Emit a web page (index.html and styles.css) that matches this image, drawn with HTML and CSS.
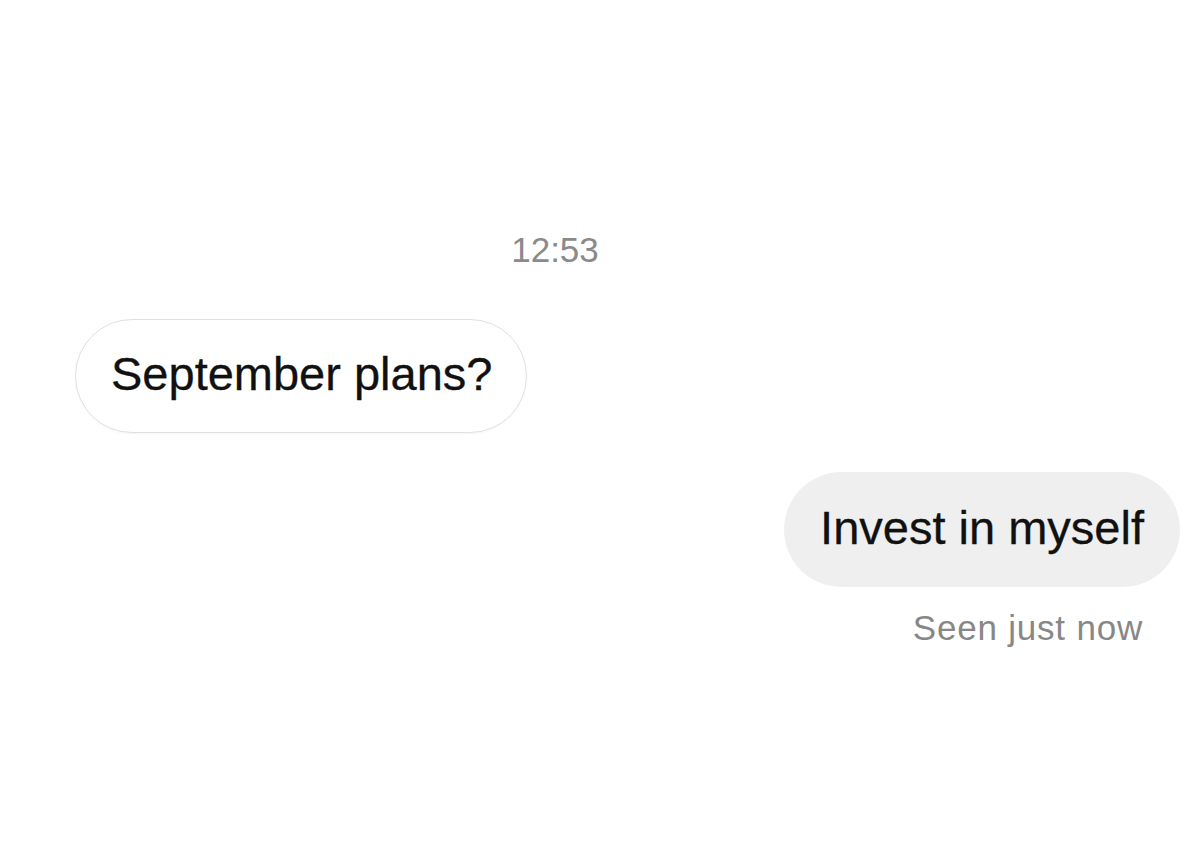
FILE: index.html
```html
<!DOCTYPE html>
<html lang="en">
<head>
<meta charset="utf-8">
<title>Chat</title>
<link rel="stylesheet" href="styles.css">
</head>
<body>
<main class="thread">
  <div class="time">12:53</div>
  <div class="row row-in">
    <div class="bubble bubble-in">September plans?</div>
  </div>
  <div class="row row-out">
    <div class="bubble bubble-out">Invest in myself</div>
  </div>
  <div class="seen">Seen just now</div>
</main>
</body>
</html>
```

FILE: styles.css
```css
html, body {
  margin: 0;
  padding: 0;
  background: #ffffff;
}

body {
  font-family: "Liberation Sans", Arial, Helvetica, sans-serif;
  width: 1200px;
  height: 857px;
  overflow: hidden;
}

.thread {
  display: flex;
  flex-direction: column;
  padding-top: 230px;
}

.time {
  font-size: 35px;
  line-height: 40px;
  color: #8a8a8a;
  text-align: center;
  padding-right: 90px;
}

.row {
  display: flex;
}

.row-in {
  justify-content: flex-start;
  padding-left: 75px;
  margin-top: 49px;
}

.row-out {
  justify-content: flex-end;
  padding-right: 20px;
  margin-top: 39px;
}

.bubble {
  font-size: 47px;
  line-height: 56px;
  color: #111111;
  border-radius: 60px;
  white-space: nowrap;
  -webkit-text-stroke: 0.3px #111111;
}

.bubble-in {
  border: 1.5px solid #e0e0e0;
  padding: 26px 34px 30px 35px;
  box-shadow: 0 1px 2px rgba(0, 0, 0, 0.04);
}

.bubble-out {
  background: #efefef;
  padding: 28px 36px 31px 36px;
}

.seen {
  align-self: flex-end;
  margin-right: 57px;
  margin-top: 21px;
  font-size: 35px;
  line-height: 40px;
  color: #878787;
  letter-spacing: 0.8px;
}
```
